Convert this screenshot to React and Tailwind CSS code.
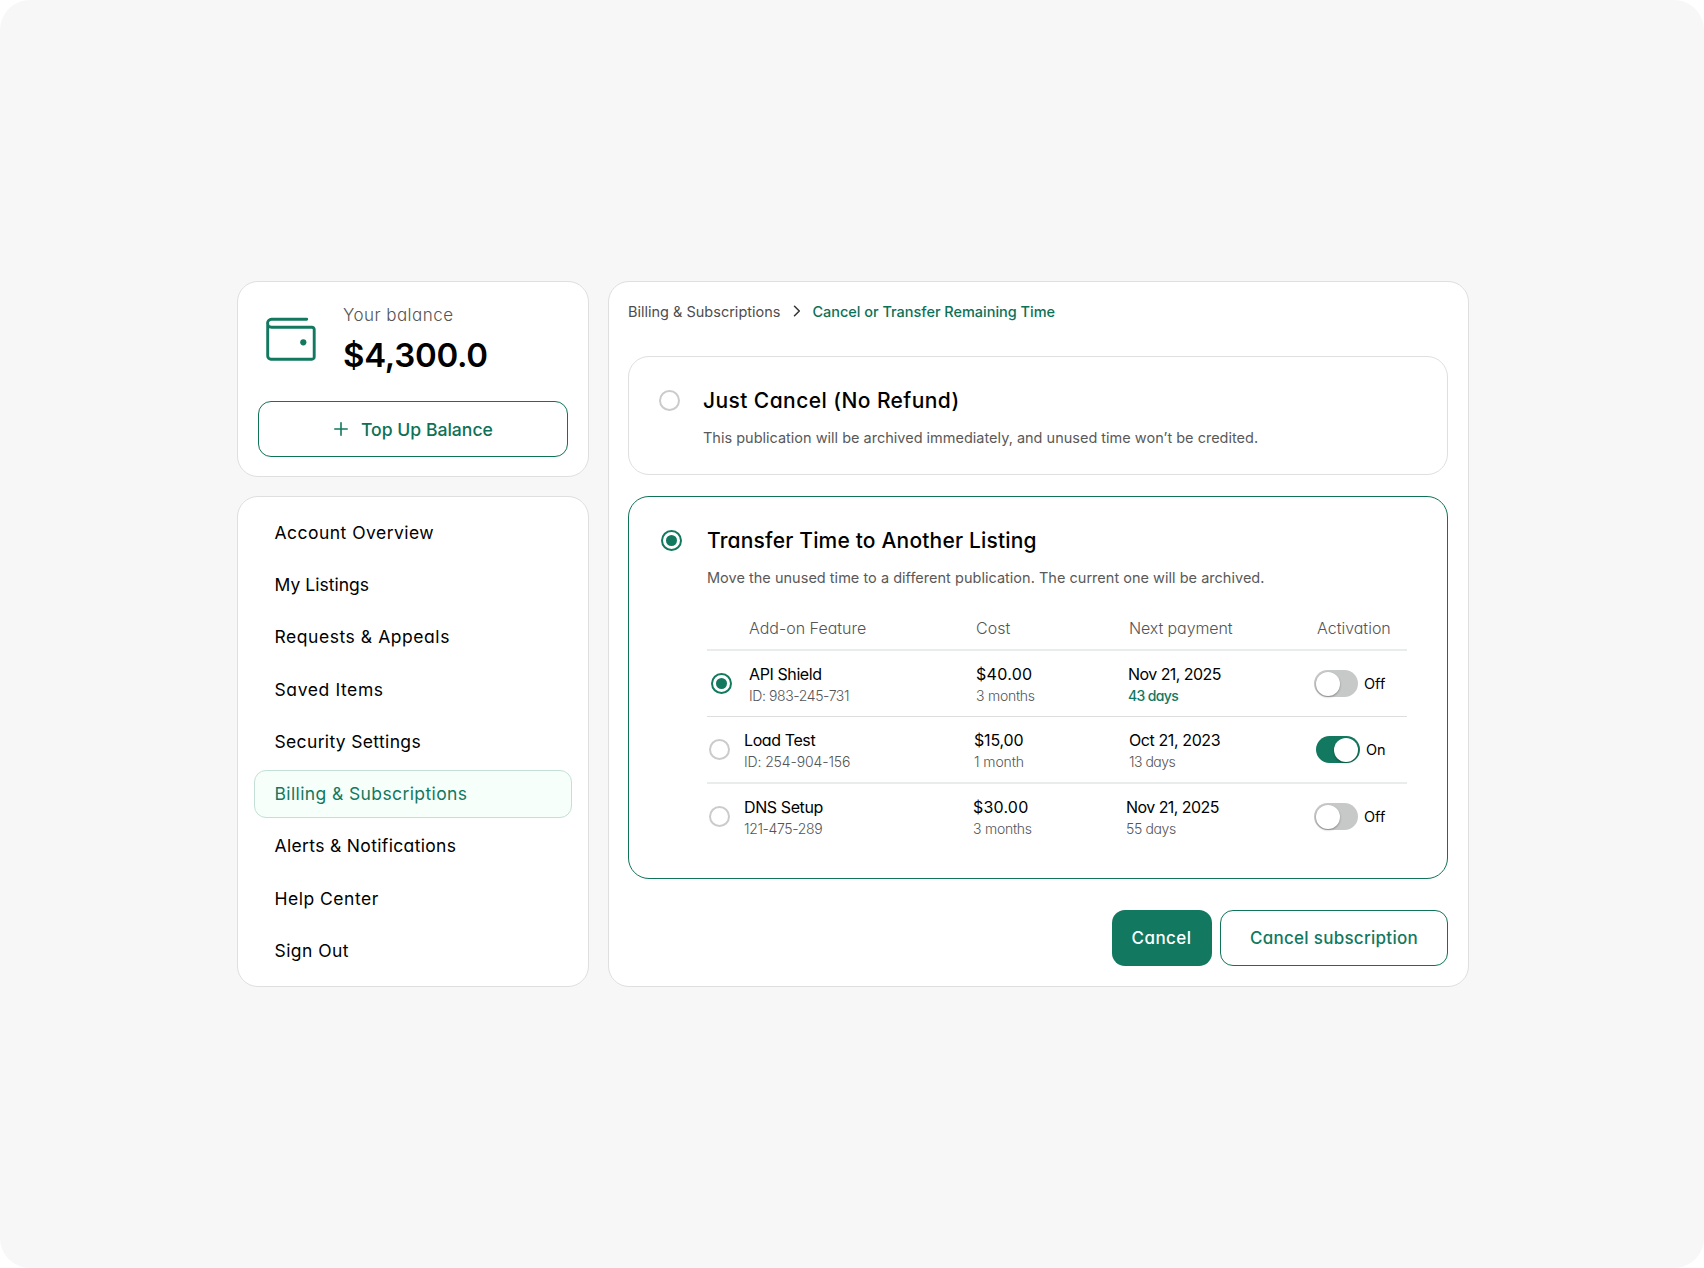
import React from "react";

const menu = [
  { label: "Account Overview", tracking: "tracking-[0.47px]" },
  { label: "My Listings", tracking: "tracking-[0.02px]" },
  { label: "Requests & Appeals", tracking: "tracking-[0.55px]" },
  { label: "Saved Items", tracking: "tracking-[0.6px]" },
  { label: "Security Settings", tracking: "tracking-[0.34px]" },
  { label: "Billing & Subscriptions", tracking: "tracking-[0.39px]", active: true },
  { label: "Alerts & Notifications", tracking: "tracking-[0.34px]" },
  { label: "Help Center", tracking: "tracking-[0.5px]" },
  { label: "Sign Out", tracking: "tracking-[0.45px]" },
];

const addons = [
  {
    name: "API Shield",
    id: "ID: 983-245-731",
    idClass: "tracking-[-0.4px]",
    cost: "$40.00",
    costClass: "tracking-[0.3px]",
    period: "3 months",
    periodClass: "tracking-[-0.25px]",
    date: "Nov 21, 2025",
    dateClass: "tracking-[-0.55px]",
    left: "43 days",
    leftClass: "font-medium tracking-[-0.65px] text-[#12785f]",
    on: false,
    selected: true,
    row: "h-[66px] grid-cols-[42px_227px_152px_186px_1fr] border-b border-[#dedede]",
    radio: "pl-1",
  },
  {
    name: "Load Test",
    id: "ID: 254-904-156",
    idClass: "tracking-[-0.12px]",
    cost: "$15,00",
    costClass: "tracking-[-0.17px]",
    period: "1 month",
    periodClass: "tracking-[-0.09px]",
    date: "Oct 21, 2023",
    dateClass: "tracking-[-0.4px]",
    left: "13 days",
    leftClass: "font-light tracking-[-0.5px] text-[#555]",
    on: true,
    selected: false,
    row: "h-[67px] grid-cols-[37px_230px_155px_187px_1fr] border-b-2 border-[#e8edeb]",
    radio: "pl-[2px]",
  },
  {
    name: "DNS Setup",
    id: "121-475-289",
    idClass: "tracking-[-0.36px]",
    cost: "$30.00",
    costClass: "tracking-[0.2px]",
    period: "3 months",
    periodClass: "tracking-[-0.25px]",
    date: "Nov 21, 2025",
    dateClass: "tracking-[-0.55px]",
    left: "55 days",
    leftClass: "font-light tracking-[-0.36px] text-[#555]",
    on: false,
    selected: false,
    row: "h-[65px] grid-cols-[37px_229px_153px_188px_1fr]",
    radio: "pl-[2px]",
  },
];

function Radio({ checked }) {
  return checked ? (
    <span className="flex size-[21px] shrink-0 items-center justify-center rounded-full border-2 border-[#12785f]">
      <span className="size-[11px] rounded-full bg-[#12785f]" />
    </span>
  ) : (
    <span className="block size-[21px] shrink-0 rounded-full border-2 border-[#cbcbcb]" />
  );
}

function Toggle({ on }) {
  return (
    <span
      className={`flex h-[27px] w-[44px] items-center rounded-full pr-[2.5px] pl-[1.5px] ${
        on ? "justify-end bg-[#12785f]" : "bg-[#c7c8c8]"
      }`}
    >
      <span className="size-6 rounded-full bg-white shadow-[0_1px_2px_rgba(0,0,0,0.35)]" />
    </span>
  );
}

export default function App() {
  return (
    <div className="h-[1268px] w-[1704px] bg-white font-['Inter',sans-serif] text-black">
      <div className="h-full w-full rounded-[30px] bg-[#f7f7f7] pt-[281px] pl-[237px]">
        <div className="flex h-[706px] gap-[19px] [font-feature-settings:'cv11']">
          {/* SIDEBAR */}
          <aside className="flex w-[352px] flex-col gap-[19px]">
            {/* BALANCE */}
            <div className="h-[196px] rounded-[21px] border border-[#dfdfdf] bg-white px-5 pt-[21px]">
              <div className="flex pl-2">
                <svg
                  className="mt-[14px] h-[44px] w-[50px]"
                  viewBox="0 0 50 44"
                  fill="none"
                  stroke="#12785f"
                  strokeWidth="2.9"
                  strokeLinecap="round"
                  strokeLinejoin="round"
                >
                  <path d="M40.7 2.3H5.5a3.9 3.9 0 0 0 0 7.9h40.4a2.3 2.3 0 0 1 2.3 2.3v27.4a2.3 2.3 0 0 1-2.3 2.3H4.9a3.2 3.2 0 0 1-3.2-3.2V6.2" />
                  <circle cx="37.3" cy="25.3" r="3.1" fill="#12785f" stroke="none" />
                </svg>
                <div className="ml-[27px]">
                  <div className="text-[17px] leading-6 font-light tracking-[0.45px] text-[#555]">Your balance</div>
                  <div className="mt-2 text-[33px] leading-10 font-semibold tracking-[-0.28px]">$4,300.0</div>
                </div>
              </div>
              <button className="mt-[26px] flex h-14 w-[310px] items-center rounded-[13px] border border-[#0f7358] pl-[75px] text-[17.6px] font-medium text-[#0c7157] [font-feature-settings:normal]">
                <svg
                  className="mr-[13px] size-[14px]"
                  viewBox="0 0 14 14"
                  stroke="#12785f"
                  strokeWidth="1.6"
                  strokeLinecap="round"
                >
                  <path d="M7 .8v12.4M.8 7h12.4" />
                </svg>
                <span className="pt-[2px]">Top Up Balance</span>
              </button>
            </div>

            {/* MENU */}
            <nav className="flex flex-1 flex-col justify-between rounded-[21px] border border-[#dfdfdf] bg-white px-4 pt-3 pb-[11px]">
              {menu.map((item) => (
                <a
                  key={item.label}
                  className={`flex h-12 items-center rounded-[12px] border pl-[19.5px] text-[17.5px] whitespace-nowrap ${item.tracking} ${
                    item.active ? "border-[#c3dfd6] bg-[#f7fffa] text-[#12785f]" : "border-transparent"
                  }`}
                >
                  {item.label}
                </a>
              ))}
            </nav>
          </aside>

          {/* MAIN PANEL */}
          <main className="flex w-[861px] flex-col rounded-[21px] border border-[#dfdfdf] bg-white pt-[18px] pr-5 pl-[19px]">
            <div className="flex h-[23px] items-center text-[14.5px] whitespace-nowrap [font-feature-settings:normal]">
              <span className="text-[#4d4d4d]">Billing & Subscriptions</span>
              <svg
                className="mr-[11px] mb-px ml-[13px] h-3 w-2"
                viewBox="0 0 8 12"
                fill="none"
                stroke="#333"
                strokeWidth="1.5"
                strokeLinecap="round"
                strokeLinejoin="round"
              >
                <path d="M1.5 1.2 6.3 6l-4.8 4.8" />
              </svg>
              <span className="font-medium tracking-[-0.02px] text-[#0c7157]">Cancel or Transfer Remaining Time</span>
            </div>

            {/* OPTION: CANCEL */}
            <section className="mt-[33px] flex h-[119px] rounded-[21px] border border-[#dfdfdf] pt-[29px] pl-[30px]">
              <div className="mt-1 mr-[23px]">
                <Radio />
              </div>
              <div>
                <h2 className="text-[21px] leading-[30px] font-medium tracking-[0.42px]">Just Cancel (No Refund)</h2>
                <p className="mt-[11px] text-[14.5px] leading-[22px] text-[#595959] [font-feature-settings:normal]">
                  This publication will be archived immediately, and unused time won’t be credited.
                </p>
              </div>
            </section>

            {/* OPTION: TRANSFER */}
            <section className="mt-[21px] h-[383px] rounded-[21px] border border-[#0f7358] pt-[29px] pl-8">
              <div className="flex">
                <div className="mt-1 mr-[25px]">
                  <Radio checked />
                </div>
                <div>
                  <h2 className="text-[21px] leading-[30px] font-medium tracking-[0.18px]">
                    Transfer Time to Another Listing
                  </h2>
                  <p className="mt-[11px] text-[14.5px] leading-[22px] tracking-[0.02px] text-[#595959] [font-feature-settings:normal]">
                    Move the unused time to a different publication. The current one will be archived.
                  </p>
                </div>
              </div>

              <div className="mt-[27px] ml-[46px] w-[700px]">
                <div className="grid h-[35px] grid-cols-[42px_227px_153px_188px_1fr] border-b-2 border-[#e8edeb] text-base leading-6 font-light text-[#555]">
                  <span />
                  <div>Add-on Feature</div>
                  <div>Cost</div>
                  <div className="tracking-[-0.1px]">Next payment</div>
                  <div>Activation</div>
                </div>

                {addons.map((a) => (
                  <div key={a.name} className={`grid items-center ${a.row}`}>
                    <div className={a.radio}>
                      <Radio checked={a.selected} />
                    </div>
                    <div className="pt-[2px]">
                      <div className="text-base leading-[21px] tracking-[-0.4px]">{a.name}</div>
                      <div className={`text-sm leading-[21px] font-light text-[#555] ${a.idClass}`}>{a.id}</div>
                    </div>
                    <div className="pt-[2px]">
                      <div className={`text-base leading-[21px] ${a.costClass}`}>{a.cost}</div>
                      <div className={`text-sm leading-[21px] font-light text-[#555] ${a.periodClass}`}>{a.period}</div>
                    </div>
                    <div className="pt-[2px]">
                      <div className={`text-base leading-[21px] ${a.dateClass}`}>{a.date}</div>
                      <div className={`text-sm leading-[21px] ${a.leftClass}`}>{a.left}</div>
                    </div>
                    <div className="flex items-center gap-1.5 text-[14.5px]">
                      <Toggle on={a.on} />
                      <span>{a.on ? "On" : "Off"}</span>
                    </div>
                  </div>
                ))}
              </div>
            </section>

            {/* ACTIONS */}
            <div className="mt-[31px] flex justify-end gap-2 text-[17px] font-medium">
              <button className="h-14 w-[100px] rounded-[13px] bg-[#12785f] pt-[2px] pr-2 pl-[7px] tracking-[0.45px] text-white">
                Cancel
              </button>
              <button className="h-14 w-[228px] rounded-[13px] border border-[#0f7358] pt-[2px] tracking-[0.27px] text-[#12785f]">
                Cancel subscription
              </button>
            </div>
          </main>
        </div>
      </div>
    </div>
  );
}
